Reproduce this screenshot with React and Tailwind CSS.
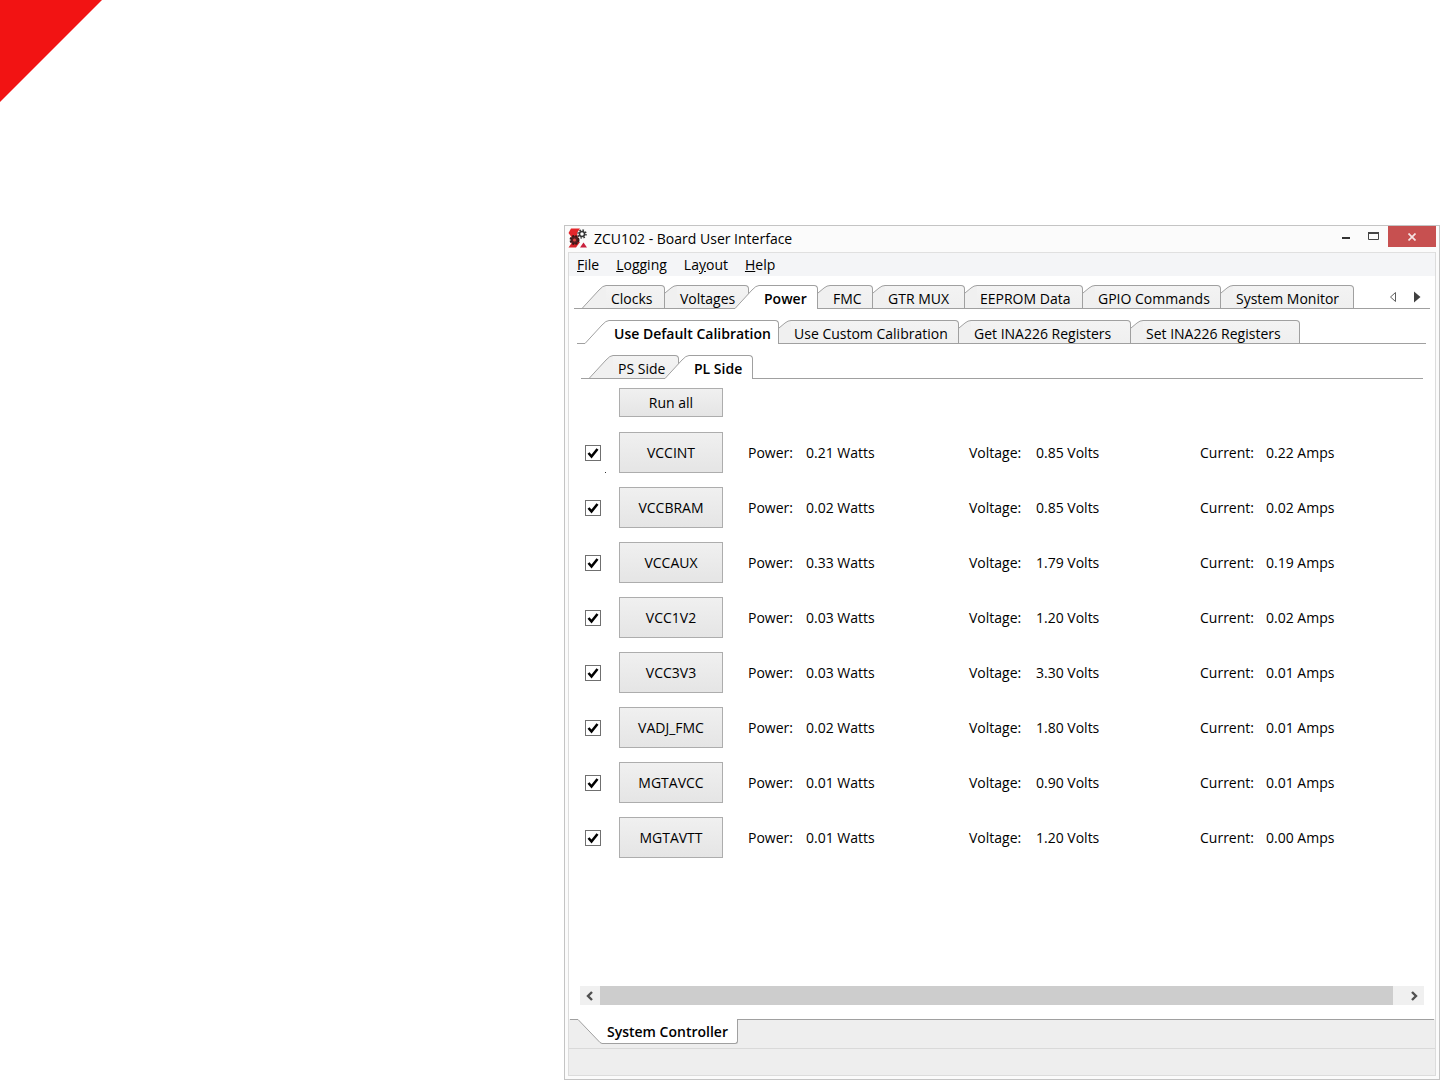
import React, { useState } from 'react';

const boardTabs = [
    { label: 'Clocks', width: 'w-[83px]' },
    { label: 'Voltages', width: 'w-[84px]' },
    { label: 'Power', width: 'w-[83px]' },
    { label: 'FMC', width: 'w-[55px]' },
    { label: 'GTR MUX', width: 'w-[92px]' },
    { label: 'EEPROM Data', width: 'w-[118px]' },
    { label: 'GPIO Commands', width: 'w-[138px]' },
    { label: 'System Monitor', width: 'w-[133px]' },
];

const calibrationTabs = [
    { label: 'Use Default Calibration', width: 'w-[194px]' },
    { label: 'Use Custom Calibration', width: 'w-[180px]' },
    { label: 'Get INA226 Registers', width: 'w-[172px]' },
    { label: 'Set INA226 Registers', width: 'w-[169px]' },
];

const sideTabs = [
    { label: 'PS Side', width: 'w-[90px]' },
    { label: 'PL Side', width: 'w-[88px]' },
];

const rails = [
    { name: 'VCCINT', power: '0.21', voltage: '0.85', current: '0.22' },
    { name: 'VCCBRAM', power: '0.02', voltage: '0.85', current: '0.02' },
    { name: 'VCCAUX', power: '0.33', voltage: '1.79', current: '0.19' },
    { name: 'VCC1V2', power: '0.03', voltage: '1.20', current: '0.02' },
    { name: 'VCC3V3', power: '0.03', voltage: '3.30', current: '0.01' },
    { name: 'VADJ_FMC', power: '0.02', voltage: '1.80', current: '0.01' },
    { name: 'MGTAVCC', power: '0.01', voltage: '0.90', current: '0.01' },
    { name: 'MGTAVTT', power: '0.01', voltage: '1.20', current: '0.00' },
];

const Tab = ({ label, width, selected, first, onClick }) => {
    const wide = selected || first;
    const fill = selected ? '#ffffff' : '#f0f0f0';

    return (
        <button
            role="tab"
            aria-selected={selected}
            onClick={onClick}
            className={`flex h-6 shrink-0 ${width} ${selected && !first ? '-ml-[14px] z-10' : ''}`}
        >
            {wide ? (
                <svg className="h-6 w-6 shrink-0" viewBox="0 0 24 24" fill="none">
                    <path d="M0 24V23.5L17 5Q22 0.5 24 0.5V24Z" fill={fill} />
                    <path d="M0 23.5L17 5Q21 0.5 24 0.5" stroke="#a0a0a0" />
                    {!selected && <path d="M0 23.5H24" stroke="#a0a0a0" />}
                </svg>
            ) : (
                <svg className="h-6 w-3 shrink-0" viewBox="0 0 12 24" fill="none">
                    <path d="M0 24V8L6 3Q9 0.5 12 0.5V24Z" fill={fill} />
                    <path d="M0 8L6 3Q9 0.5 12 0.5" stroke="#a0a0a0" />
                    <path d="M0 23.5H12" stroke="#a0a0a0" />
                </svg>
            )}
            <span
                className={`h-6 grow whitespace-nowrap rounded-tr-[4px] border-t border-r border-[#a0a0a0] pt-[3px] text-left leading-5 ${wide ? 'pl-[5px]' : 'pl-[3px]'} ${selected ? 'bg-white font-semibold' : 'border-b bg-linear-to-b from-[#f3f3f3] to-[#efefef]'}`}
            >
                {label}
            </span>
        </button>
    );
};

const TabBar = ({ tabs, initial, children }) => {
    const [active, setActive] = useState(initial);

    return (
        <div role="tablist" className="flex h-6">
            <span className="w-2 shrink-0 border-b border-[#a0a0a0]" />
            {tabs.map((tab, i) => (
                <Tab
                    key={tab.label}
                    label={tab.label}
                    width={tab.width}
                    first={i === 0}
                    selected={active === i}
                    onClick={() => setActive(i)}
                />
            ))}
            <div className="flex grow justify-end border-b border-[#a0a0a0]">{children}</div>
        </div>
    );
};

const Logo = () => (
    <svg className="h-5 w-5" viewBox="0 0 20 20">
        <path d="M3 0.5H12L9 5L10 10L5 11L0.5 5Z" fill="#e5262b" />
        <path d="M0.5 19.5L5 13L12 14L8 19.5Z" fill="#d8232a" />
        <path d="M12 19.5L15.5 14.5L19 19.5Z" fill="#c8203c" />
        <circle cx="6.5" cy="12" r="4" fill="#5a2022" stroke="#3a1717" strokeWidth="2" strokeDasharray="2 1.2" />
        <circle cx="6.5" cy="12" r="1.5" fill="#e04a45" />
        <circle cx="14" cy="6" r="2.5" fill="#fff" stroke="#333" strokeWidth="1.5" />
        <circle cx="14" cy="6" r="4" fill="none" stroke="#333" strokeWidth="1.5" strokeDasharray="1.5 1.64" />
    </svg>
);

const TitleBar = () => (
    <div className="flex h-[26px] items-start bg-[#fbfbfb] pl-[3px]">
        <div className="mt-[2px]"><Logo /></div>
        <h1 className="grow pt-[3px] pl-[6px] leading-5">ZCU102 - Board User Interface</h1>
        <button aria-label="Minimize" className="flex h-5 w-7 items-center justify-center">
            <svg className="h-5 w-5" viewBox="0 0 20 20"><path d="M6 12H14" stroke="#333" strokeWidth="2" /></svg>
        </button>
        <button aria-label="Maximize" className="flex h-5 w-7 items-center justify-center">
            <svg className="h-5 w-5" viewBox="0 0 20 20" fill="none" stroke="#444">
                <path d="M4.5 6.5H14.5V13.5H4.5Z" />
                <path d="M4 7H15" strokeWidth="2" />
            </svg>
        </button>
        <button aria-label="Close" className="mr-[3px] flex h-[21px] w-12 items-center justify-center bg-[#c75050]">
            <svg className="h-2 w-2" viewBox="0 0 8 8"><path d="M0.5 0.5L7.5 7.5M7.5 0.5L0.5 7.5" stroke="#f5e4e4" strokeWidth="1.7" /></svg>
        </button>
    </div>
);

const MenuBar = () => (
    <nav className="flex h-6 gap-[17px] border-t border-[#e0e0e0] bg-[#f4f5f7] pl-2 leading-6">
        <button><u>F</u>ile</button>
        <button><u>L</u>ogging</button>
        <button>La<u>y</u>out</button>
        <button><u>H</u>elp</button>
    </nav>
);

const Reading = ({ label, value }) => (
    <>
        <span>{label}:</span>
        <span>{value}</span>
    </>
);

const Rail = ({ name, power, voltage, current }) => {
    const [checked, setChecked] = useState(true);

    return (
        <div className="grid grid-cols-[34px_129px_58px_163px_67px_164px_66px_1fr] items-center whitespace-nowrap">
            <label className="grid h-4 w-4">
                <input
                    type="checkbox"
                    aria-label={name}
                    checked={checked}
                    onChange={() => setChecked(!checked)}
                    className="col-start-1 row-start-1 h-4 w-4 appearance-none border border-[#707070] bg-white"
                />
                {checked && (
                    <svg className="pointer-events-none col-start-1 row-start-1 h-4 w-4" viewBox="0 0 16 16" fill="none">
                        <path d="M3.5 8L6.5 11.5L12.5 4" stroke="#000" strokeWidth="2.6" />
                    </svg>
                )}
            </label>
            <button className="h-[41px] w-[104px] border border-[#adadad] bg-linear-to-b from-[#f0f0f0] to-[#e5e5e5]">{name}</button>
            <Reading label="Power" value={`${power} Watts`} />
            <Reading label="Voltage" value={`${voltage} Volts`} />
            <Reading label="Current" value={`${current} Amps`} />
        </div>
    );
};

const ScrollBar = () => (
    <div className="mr-[11px] ml-[11px] flex h-[19px] bg-[#f0f0f0]">
        <button aria-label="Scroll left" className="flex w-5 items-center justify-center">
            <svg className="h-3 w-3" viewBox="0 0 12 12" fill="none"><path d="M8 2L4 6L8 10" stroke="#505050" strokeWidth="2.4" /></svg>
        </button>
        <div className="mr-[11px] grow bg-[#cdcdcd]" />
        <button aria-label="Scroll right" className="flex w-5 items-center justify-center">
            <svg className="h-3 w-3" viewBox="0 0 12 12" fill="none"><path d="M4 2L8 6L4 10" stroke="#505050" strokeWidth="2.4" /></svg>
        </button>
    </div>
);

const BottomTabs = () => (
    <div role="tablist" className="mr-px ml-px flex h-[29px]">
        <span className="w-2 border-t border-[#a0a0a0]" />
        <button role="tab" aria-selected="true" className="flex h-[25px] w-[160px]">
            <svg className="h-[25px] w-6 shrink-0" viewBox="0 0 24 25" fill="none">
                <path d="M0 0H24V25L0 0.5Z" fill="#fff" />
                <path d="M0 0.5L22 23.5L24 24.5" stroke="#a0a0a0" />
            </svg>
            <span className="h-[25px] grow whitespace-nowrap rounded-br-[3px] border-r border-b border-[#a0a0a0] bg-white pt-[3px] pl-[5px] text-left leading-5 font-semibold">
                System Controller
            </span>
        </button>
        <span className="grow border-t border-[#a0a0a0]" />
    </div>
);

export default function App() {
    return (
        <main className="relative flex min-h-screen flex-col bg-white pt-[225px] pl-[564px] font-['Open_Sans','Noto_Sans',sans-serif] text-[14px] text-black">
            <svg className="absolute top-0 left-0 h-[102px] w-[102px]" viewBox="0 0 102 102">
                <path d="M0 0H102L0 102Z" fill="#f21313" />
            </svg>

            <section className="flex grow flex-col border border-[#c4c4c4] bg-[#fbfbfb]">
                <TitleBar />
                <div className="mx-[3px] mb-[3px] flex grow flex-col border-x border-b border-[#dcdcdc] bg-white">
                    <MenuBar />

                    <div className="mt-[9px] mr-[5px] ml-[5px]">
                        <TabBar tabs={boardTabs} initial={2}>
                            <button aria-label="Previous tabs" className="flex h-6 w-6 items-center justify-center">
                                <svg className="h-3 w-2" viewBox="0 0 8 12" fill="none"><path d="M6.5 1.5V10.5L1.5 6Z" stroke="#606060" /></svg>
                            </button>
                            <button aria-label="Next tabs" className="mr-px flex h-6 w-6 items-center justify-center">
                                <svg className="h-3 w-2" viewBox="0 0 8 12"><path d="M1 0.5V11.5L7.5 6Z" fill="#404040" /></svg>
                            </button>
                        </TabBar>
                    </div>
                    <div className="mt-[11px] mr-[9px] ml-[8px]">
                        <TabBar tabs={calibrationTabs} initial={0} />
                    </div>
                    <div className="mt-[11px] mr-[12px] ml-[12px]">
                        <TabBar tabs={sideTabs} initial={1} />
                    </div>

                    <div className="mt-[9px] ml-[16px] flex flex-col">
                        <button className="mb-[15px] ml-[34px] h-[29px] w-[104px] border border-[#adadad] bg-linear-to-b from-[#f0f0f0] to-[#e5e5e5]">Run all</button>
                        <div className="relative flex flex-col gap-[14px]">
                            {rails.map((rail) => (
                                <Rail key={rail.name} {...rail} />
                            ))}
                            <span className="absolute top-10 left-5 h-px w-px bg-[#333]" />
                        </div>
                    </div>

                    <div className="mt-auto">
                        <ScrollBar />
                        <div className="mt-[14px] bg-[#eeeeee]">
                            <BottomTabs />
                            <div className="h-[27px] border-t border-[#d9d9d9]" />
                        </div>
                    </div>
                </div>
            </section>
        </main>
    );
}
